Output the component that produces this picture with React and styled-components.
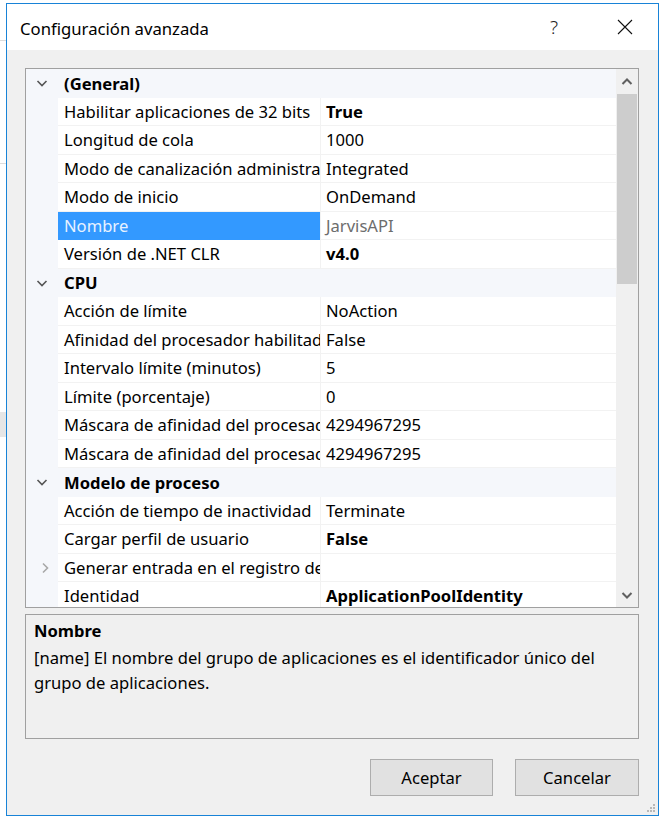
import React from 'react';
import styled, { createGlobalStyle } from 'styled-components';

const GlobalStyle = createGlobalStyle`
  html, body { margin: 0; padding: 0; background: #ffffff; }
  body { font-family: "Noto Sans", "Open Sans", sans-serif; }
`;

const Page = styled.div`
  width: 663px;
  height: 825px;
  box-sizing: border-box;
  padding: 3px 4px 9px 6px;
  background:
    linear-gradient(#ffffff, #ffffff) 659px 0 / 4px 825px no-repeat,
    linear-gradient(#dcdcdc, #dcdcdc) 0 40px / 663px 1px no-repeat,
    linear-gradient(#dcdcdc, #dcdcdc) 0 163px / 663px 1px no-repeat,
    linear-gradient(#e6e6e6, #e6e6e6) 0 412px / 6px 25px no-repeat,
    #ffffff;
  overflow: hidden;
`;

const Dialog = styled.div`
  position: relative;
  height: 100%;
  box-sizing: border-box;
  border: 1px solid #1883d7;
  background: #f0f0f0;
  display: flex;
  flex-direction: column;
`;

const TitleBar = styled.div`
  height: 46px;
  background: #ffffff;
  display: flex;
  align-items: center;
  padding-left: 13px;
  padding-right: 10px;
  flex-shrink: 0;
`;

const Title = styled.div`
  flex: 1;
  font-size: 16.7px;
  color: #000;
  padding-top: 2px;
`;

const TitleButton = styled.div`
  width: 46px;
  height: 46px;
  margin-right: ${p => p.$gap || 0}px;
  display: flex;
  align-items: center;
  justify-content: center;
  font-size: 19px;
  color: #222;
  font-weight: 300;
`;

const Body = styled.div`
  flex: 1;
  display: flex;
  flex-direction: column;
  padding: 18px 19px 0 18px;
`;

const Grid = styled.div`
  height: 540px;
  box-sizing: border-box;
  border: 1px solid #a0a0a0;
  background: #ffffff;
  display: flex;
  overflow: hidden;
`;

const Rows = styled.div`
  flex: 1;
  overflow: hidden;
`;

const Row = styled.div`
  height: 28.5px;
  display: flex;
  align-items: stretch;
  font-size: 16.6px;
  color: #000;
  background: ${p => (p.$category ? '#f5f7fb' : '#ffffff')};
  box-sizing: border-box;
`;

const Margin = styled.div`
  width: 32px;
  flex-shrink: 0;
  display: flex;
  align-items: center;
  padding-left: ${p => (p.$collapsed ? 13 : 10)}px;
  box-sizing: border-box;
  background: #f5f7fb;
`;

const CategoryLabel = styled.div`
  display: flex;
  align-items: center;
  padding-left: 6px;
  font-weight: 700;
`;

const NameCell = styled.div`
  width: 262px;
  flex-shrink: 0;
  display: flex;
  align-items: center;
  padding-left: 6px;
  box-sizing: border-box;
  white-space: nowrap;
  overflow: hidden;
  background: ${p => (p.$selected ? '#3399ff' : '#ffffff')};
  color: ${p => (p.$selected ? '#e8f2ff' : '#000')};
  border-bottom: 1px solid ${p => (p.$selected ? '#3399ff' : '#f2f2f2')};
`;

const ValueCell = styled.div`
  flex: 1;
  display: flex;
  align-items: center;
  padding-left: 5px;
  white-space: nowrap;
  overflow: hidden;
  border-left: 1px solid #f2f2f2;
  border-bottom: 1px solid #f2f2f2;
  font-weight: ${p => (p.$bold ? 700 : 400)};
  color: ${p => (p.$readonly ? '#6d6d6d' : '#000')};
`;

const ScrollBar = styled.div`
  width: 22px;
  flex-shrink: 0;
  background: #f0f0f0;
  display: flex;
  flex-direction: column;
  align-items: center;
`;

const ScrollArrow = styled.div`
  height: 25px;
  width: 100%;
  display: flex;
  align-items: center;
  justify-content: center;
`;

const Thumb = styled.div`
  width: 20px;
  height: 190px;
  background: #cdcdcd;
`;

const Track = styled.div`
  flex: 1;
`;

const Description = styled.div`
  margin-top: 6px;
  height: 125px;
  box-sizing: border-box;
  border: 1px solid #a0a0a0;
  padding: 4px 8px;
  font-size: 16.6px;
  color: #000;
`;

const DescTitle = styled.div`
  font-weight: 700;
  line-height: 24px;
`;

const DescText = styled.div`
  line-height: 25px;
  margin-top: 2px;
`;

const Buttons = styled.div`
  display: flex;
  justify-content: flex-end;
  gap: 22px;
  margin-top: 20px;
`;

const Button = styled.button`
  width: ${p => p.$w}px;
  height: 37px;
  border: 1px solid #adadad;
  background: #e1e1e1;
  font-family: inherit;
  font-size: 16.6px;
  color: #000;
  padding: 0;
`;

const Grip = styled.svg`
  position: absolute;
  right: 3px;
  bottom: 3px;
`;

const Chevron = ({ dir, color }) => (
  <svg width="12" height="12" viewBox="0 0 12 12">
    <path
      d={dir === 'down' ? 'M1.5 4 L6 8.5 L10.5 4' : 'M4 1.5 L8.5 6 L4 10.5'}
      fill="none"
      stroke={color}
      strokeWidth="1.6"
    />
  </svg>
);

const ScrollChevron = ({ up }) => (
  <svg width="12" height="10" viewBox="0 0 12 10">
    <path d={up ? 'M1.5 7 L6 2.5 L10.5 7' : 'M1.5 3 L6 7.5 L10.5 3'} fill="none" stroke="#606060" strokeWidth="2" />
  </svg>
);

const data = [
  { category: '(General)' },
  { name: 'Habilitar aplicaciones de 32 bits', value: 'True', bold: true },
  { name: 'Longitud de cola', value: '1000' },
  { name: 'Modo de canalización administrada', value: 'Integrated' },
  { name: 'Modo de inicio', value: 'OnDemand' },
  { name: 'Nombre', value: 'JarvisAPI', selected: true, readonly: true },
  { name: 'Versión de .NET CLR', value: 'v4.0', bold: true },
  { category: 'CPU' },
  { name: 'Acción de límite', value: 'NoAction' },
  { name: 'Afinidad del procesador habilitada', value: 'False' },
  { name: 'Intervalo límite (minutos)', value: '5' },
  { name: 'Límite (porcentaje)', value: '0' },
  { name: 'Máscara de afinidad del procesador', value: '4294967295' },
  { name: 'Máscara de afinidad del procesador (64 bits)', value: '4294967295' },
  { category: 'Modelo de proceso' },
  { name: 'Acción de tiempo de inactividad', value: 'Terminate' },
  { name: 'Cargar perfil de usuario', value: 'False', bold: true },
  { name: 'Generar entrada en el registro de modelo de proceso', value: '', collapsed: true },
  { name: 'Identidad', value: 'ApplicationPoolIdentity', bold: true },
  { name: 'Tiempo de espera de inactividad (minutos)', value: '20' },
];

export default function App() {
  return (
    <Page>
      <GlobalStyle />
      <Dialog>
        <TitleBar>
          <Title>Configuración avanzada</Title>
          <TitleButton $gap={25}>?</TitleButton>
          <TitleButton>
            <svg width="16" height="16" viewBox="0 0 16 16">
              <path d="M1 1 L15 15 M15 1 L1 15" stroke="#111" strokeWidth="1.1" />
            </svg>
          </TitleButton>
        </TitleBar>
        <Body>
          <Grid>
            <Rows>
              {data.map((r, i) =>
                r.category ? (
                  <Row key={i} $category>
                    <Margin>
                      <Chevron dir="down" color="#555" />
                    </Margin>
                    <CategoryLabel>{r.category}</CategoryLabel>
                  </Row>
                ) : (
                  <Row key={i}>
                    <Margin $collapsed={r.collapsed}>
                      {r.collapsed && <Chevron dir="right" color="#a8a8a8" />}
                    </Margin>
                    <NameCell $selected={r.selected}>{r.name}</NameCell>
                    <ValueCell $bold={r.bold} $readonly={r.readonly}>{r.value}</ValueCell>
                  </Row>
                )
              )}
            </Rows>
            <ScrollBar>
              <ScrollArrow>
                <ScrollChevron up />
              </ScrollArrow>
              <Thumb />
              <Track />
              <ScrollArrow>
                <ScrollChevron />
              </ScrollArrow>
            </ScrollBar>
          </Grid>
          <Description>
            <DescTitle>Nombre</DescTitle>
            <DescText>
              [name] El nombre del grupo de aplicaciones es el identificador único del grupo de aplicaciones.
            </DescText>
          </Description>
          <Buttons>
            <Button $w={123}>Aceptar</Button>
            <Button $w={124}>Cancelar</Button>
          </Buttons>
        </Body>
        <Grip width="10" height="10" viewBox="0 0 10 10">
          {[[8, 2], [8, 5], [5, 5], [8, 8], [5, 8], [2, 8]].map(([x, y], i) => (
            <rect key={i} x={x} y={y} width="2" height="2" fill="#b8b8b8" />
          ))}
        </Grip>
      </Dialog>
    </Page>
  );
}
